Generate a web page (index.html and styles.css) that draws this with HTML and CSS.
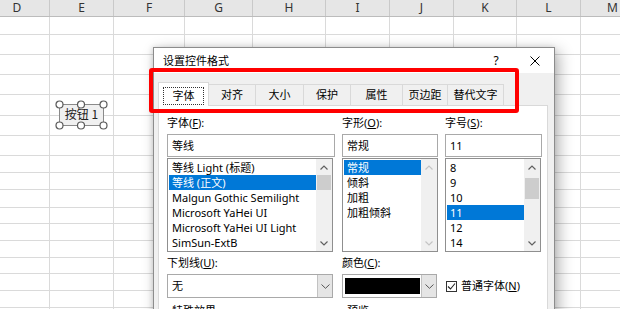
FILE: index.html
```html
<!DOCTYPE html>
<html lang="zh-CN">
<head>
<meta charset="utf-8">
<title>设置控件格式</title>
<link rel="stylesheet" href="styles.css">
</head>
<body>
<div class="sheet">
  <div class="head">
    <div class="hc w-d">D</div>
    <div class="hc w-e">E</div>
    <div class="hc w-f">F</div>
    <div class="hc w-g">G</div>
    <div class="hc w-h">H</div>
    <div class="hc w-i">I</div>
    <div class="hc w-j">J</div>
    <div class="hc w-k">K</div>
    <div class="hc w-l">L</div>
    <div class="hc w-m">M</div>
  </div>
  <div class="body">
    <div class="cols">
      <div class="col w-d"></div>
      <div class="col w-e"></div>
      <div class="col w-f"></div>
      <div class="col w-g"></div>
      <div class="col w-h"></div>
      <div class="col w-i"></div>
      <div class="col w-j"></div>
      <div class="col w-k"></div>
      <div class="col w-l"></div>
      <div class="col w-m"></div>
    </div>
    <div class="rows">
      <div class="row r18"></div>
      <div class="row r20"></div>
      <div class="row r20"></div>
      <div class="row r20"></div>
      <div class="row r21"></div>
      <div class="row r20"></div>
      <div class="row r20"></div>
      <div class="row r17"></div>
      <div class="row r17"></div>
      <div class="row r18"></div>
      <div class="row r16"></div>
      <div class="row r17"></div>
      <div class="row r17"></div>
      <div class="row r16"></div>
      <div class="row r17"></div>
      <div class="row r17"></div>
    </div>
  </div>

  <svg class="shape" width="54" height="30" viewBox="0 0 54 30">
    <rect x="4.5" y="4.5" width="44" height="21" fill="#f0f0f0" stroke="#8a8a8a" stroke-width="1"/>
    <text x="26.5" y="19" text-anchor="middle" class="shape-text">按钮 1</text>
    <circle cx="4.5" cy="4.5" r="3.5" fill="#fff" stroke="#5a5a5a" stroke-width="1.2"/>
    <circle cx="26" cy="4.5" r="3.5" fill="#fff" stroke="#5a5a5a" stroke-width="1.2"/>
    <circle cx="48.5" cy="4.5" r="3.5" fill="#fff" stroke="#5a5a5a" stroke-width="1.2"/>
    <circle cx="4.5" cy="25.5" r="3.5" fill="#fff" stroke="#5a5a5a" stroke-width="1.2"/>
    <circle cx="26" cy="25.5" r="3.5" fill="#fff" stroke="#5a5a5a" stroke-width="1.2"/>
    <circle cx="48.5" cy="25.5" r="3.5" fill="#fff" stroke="#5a5a5a" stroke-width="1.2"/>
  </svg>

  <div class="dialog">
    <div class="titlebar">
      <span class="title">设置控件格式</span>
      <span class="help">?</span>
      <span class="close">
        <svg width="10" height="10" viewBox="0 0 10 10"><path d="M0.5 0.5 L9.5 9.5 M9.5 0.5 L0.5 9.5" stroke="#000" stroke-width="1" fill="none"/></svg>
      </span>
    </div>
    <div class="dlg-body">
      <div class="tabs">
        <div class="tab active t1"><span class="focus">字体</span></div>
        <div class="tab t2">对齐</div>
        <div class="tab t3">大小</div>
        <div class="tab t4">保护</div>
        <div class="tab t5">属性</div>
        <div class="tab t6">页边距</div>
        <div class="tab t7">替代文字</div>
      </div>
      <div class="panel">
        <div class="fgrid">
          <div class="lbl">字体(<u>F</u>):</div>
          <div class="lbl">字形(<u>O</u>):</div>
          <div class="lbl">字号(<u>S</u>):</div>

          <div class="input">等线</div>
          <div class="input">常规</div>
          <div class="input">11</div>

          <div class="list list-font">
            <div class="items">
              <div class="item">等线 Light (标题)</div>
              <div class="item sel">等线 (正文)</div>
              <div class="item">Malgun Gothic Semilight</div>
              <div class="item">Microsoft YaHei UI</div>
              <div class="item">Microsoft YaHei UI Light</div>
              <div class="item">SimSun-ExtB</div>
            </div>
            <div class="sbar">
              <div class="arrow"><svg width="8" height="5" viewBox="0 0 8 5"><path d="M0.5 4.5 L4 1 L7.5 4.5" stroke="#606060" stroke-width="1.2" fill="none"/></svg></div>
              <div class="track"><div class="thumb thumb-font"></div></div>
              <div class="arrow"><svg width="8" height="5" viewBox="0 0 8 5"><path d="M0.5 0.5 L4 4 L7.5 0.5" stroke="#606060" stroke-width="1.2" fill="none"/></svg></div>
            </div>
          </div>
          <div class="list list-style">
            <div class="items">
              <div class="item sel">常规</div>
              <div class="item">倾斜</div>
              <div class="item">加粗</div>
              <div class="item">加粗倾斜</div>
            </div>
            <div class="sbar">
              <div class="arrow"><svg width="8" height="5" viewBox="0 0 8 5"><path d="M0.5 4.5 L4 1 L7.5 4.5" stroke="#c4c4c4" stroke-width="1.2" fill="none"/></svg></div>
              <div class="track"></div>
              <div class="arrow"><svg width="8" height="5" viewBox="0 0 8 5"><path d="M0.5 0.5 L4 4 L7.5 0.5" stroke="#c4c4c4" stroke-width="1.2" fill="none"/></svg></div>
            </div>
          </div>
          <div class="list list-size">
            <div class="items">
              <div class="item">8</div>
              <div class="item">9</div>
              <div class="item">10</div>
              <div class="item sel">11</div>
              <div class="item">12</div>
              <div class="item">14</div>
            </div>
            <div class="sbar">
              <div class="arrow"><svg width="8" height="5" viewBox="0 0 8 5"><path d="M0.5 4.5 L4 1 L7.5 4.5" stroke="#606060" stroke-width="1.2" fill="none"/></svg></div>
              <div class="track"><div class="thumb thumb-size"></div></div>
              <div class="arrow"><svg width="8" height="5" viewBox="0 0 8 5"><path d="M0.5 0.5 L4 4 L7.5 0.5" stroke="#606060" stroke-width="1.2" fill="none"/></svg></div>
            </div>
          </div>

          <div class="lbl">下划线(<u>U</u>):</div>
          <div class="lbl">颜色(<u>C</u>):</div>
          <div class="lbl"></div>

          <div class="combo combo-under">
            <span class="combo-val">无</span>
            <span class="combo-btn"><svg width="9" height="5" viewBox="0 0 9 5"><path d="M0.5 0.5 L4.5 4.3 L8.5 0.5" stroke="#555" stroke-width="1" fill="none"/></svg></span>
          </div>
          <div class="combo combo-color">
            <span class="swatch"></span>
            <span class="combo-btn"><svg width="9" height="5" viewBox="0 0 9 5"><path d="M0.5 0.5 L4.5 4.3 L8.5 0.5" stroke="#555" stroke-width="1" fill="none"/></svg></span>
          </div>
          <div class="check-row">
            <span class="checkbox"><svg width="9" height="9" viewBox="0 0 9 9"><path d="M1 4.5 L3.5 7 L8 1.5" stroke="#222" stroke-width="1.1" fill="none"/></svg></span>
            <span class="check-text">普通字体(<u>N</u>)</span>
          </div>

          <div class="lbl grp">特殊效果</div>
          <div class="lbl grp">预览</div>
          <div class="lbl"></div>
        </div>
      </div>
    </div>
  </div>

  <div class="highlight"></div>
</div>
</body>
</html>
```

FILE: styles.css
```css
* { box-sizing: border-box; }

body {
  margin: 0;
  font-family: "Noto Sans", "Noto Sans CJK SC", sans-serif;
  background: #fff;
}

.sheet {
  position: relative;
  width: 620px;
  height: 309px;
  overflow: hidden;
  background: #fff;
}

/* column header */
.head {
  display: flex;
  height: 17px;
  margin-left: -15px;
  background: #e6e6e6;
  border-bottom: 1px solid #bcbcbc;
}
.hc {
  flex: none;
  border-right: 1px solid #c9c9c9;
  text-align: center;
  font-size: 12px;
  line-height: 16px;
  color: #333;
}

.w-d { width: 65px; }
.w-e { width: 64px; }
.w-f { width: 71px; }
.w-g { width: 68px; }
.w-h { width: 73px; }
.w-i { width: 64px; }
.w-j { width: 64px; }
.w-k { width: 63px; }
.w-l { width: 64px; }
.w-m { width: 64px; }

/* grid body */
.body {
  display: grid;
}
.cols, .rows {
  grid-area: 1 / 1;
}
.cols {
  display: flex;
  margin-left: -15px;
}
.col {
  flex: none;
  height: 292px;
  border-right: 1px solid #dadada;
}
.rows {
  display: flex;
  flex-direction: column;
}
.row {
  flex: none;
  border-bottom: 1px solid #dadada;
}
.r16 { height: 16px; }
.r17 { height: 17px; }
.r18 { height: 18px; }
.r20 { height: 20px; }
.r21 { height: 21px; }

/* form button shape on the sheet */
.shape {
  position: absolute;
  left: 55px;
  top: 100px;
}
.shape-text {
  font-family: "Noto Sans CJK SC", sans-serif;
  font-size: 12px;
  fill: #222;
}

/* dialog */
.dialog {
  position: absolute;
  left: 153px;
  top: 47px;
  width: 402px;
  height: 300px;
  background: #f0f0f0;
  border: 1px solid #8c8c8c;
  box-shadow: 4px 4px 14px rgba(0, 0, 0, 0.3), -1px 0 5px rgba(0, 0, 0, 0.12);
  font-size: 11px;
  color: #000;
}

.titlebar {
  display: flex;
  align-items: center;
  height: 25px;
  background: #fff;
  padding-left: 9px;
  padding-right: 4px;
}
.title {
  font-size: 11px;
  line-height: 16px;
  margin-top: 1px;
}
.help {
  margin-left: auto;
  width: 20px;
  text-align: center;
  font-size: 12px;
  line-height: 16px;
  margin-top: 1px;
}
.close {
  width: 30px;
  margin-left: 14px;
  display: flex;
  justify-content: center;
  align-items: center;
  margin-top: 1px;
}

.dlg-body {
  padding: 9px 6px 0 4px;
}

/* tabs */
.tabs {
  display: flex;
  align-items: flex-end;
  height: 23px;
  position: relative;
  z-index: 1;
}
.tab {
  flex: none;
  height: 21px;
  margin-left: -1px;
  border: 1px solid #d9d9d9;
  border-bottom: none;
  background: #f0f0f0;
  text-align: center;
  line-height: 19px;
  font-size: 11px;
}
.tab.active {
  height: 24px;
  margin-left: 0;
  margin-bottom: -1px;
  background: #fff;
  padding-top: 3px;
  position: relative;
  z-index: 2;
}
.focus {
  display: inline-block;
  width: 41px;
  height: 18px;
  border: 1px dotted #333;
  line-height: 16px;
}
.t1 { width: 51px; }
.t2 { width: 48px; margin-left: -1px; }
.t3 { width: 49px; }
.t4 { width: 48px; }
.t5 { width: 53px; }
.t6 { width: 46px; }
.t7 { width: 57px; }

/* panel */
.panel {
  height: 230px;
  background: #fff;
  border: 1px solid #d9d9d9;
  padding: 9px 0 0 8px;
}

.fgrid {
  display: grid;
  grid-template-columns: 168px 96px 97px;
  grid-template-rows: 19px 24px 97px 19px 29px 16px;
  column-gap: 7px;
}

.lbl {
  line-height: 16px;
  font-size: 11px;
  white-space: nowrap;
}
.lbl u { text-underline-offset: 1px; }
.grp { padding-left: 5px; }

.input {
  height: 23px;
  border: 1px solid #a9a9a9;
  padding-left: 4px;
  line-height: 21px;
  font-size: 11px;
}

.list {
  display: flex;
  height: 94px;
  border: 1px solid #8f8f8f;
  padding: 1px 0 1px 1px;
}
.list-font { width: 166px; }
.list-style { width: 96px; }
.list-size { width: 96px; }

.items {
  flex: 1;
  min-width: 0;
}
.item {
  height: 15px;
  line-height: 15px;
  padding-left: 3px;
  white-space: nowrap;
  overflow: hidden;
  font-size: 11px;
}
.item.sel {
  background: #0078d7;
  color: #fff;
}
.list-style .item.sel { margin-right: 0; }

.sbar {
  flex: none;
  width: 16px;
  margin-top: -1px;
  margin-bottom: -1px;
  display: flex;
  flex-direction: column;
  background: #f0f0f0;
}
.arrow {
  height: 16px;
  display: flex;
  align-items: center;
  justify-content: center;
}
.track {
  flex: 1;
}
.thumb {
  background: #cdcdcd;
  margin: 0 1px;
}
.thumb-font { height: 15px; margin-top: 0; }
.thumb-size { height: 21px; margin-top: 3px; }

/* combos */
.combo {
  display: flex;
  height: 24px;
  border: 1px solid #a9a9a9;
}
.combo-under { width: 166px; }
.combo-color { width: 95px; padding: 3px 0 3px 2px; }
.combo-val {
  flex: 1;
  padding-left: 4px;
  line-height: 22px;
  font-size: 11px;
}
.combo-btn {
  flex: none;
  width: 15px;
  background: #e5e5e5;
  border-left: 1px solid #c2c2c2;
  display: flex;
  align-items: center;
  justify-content: center;
}
.combo-color .combo-btn {
  margin: -3px 0;
}
.swatch {
  flex: 1;
  background: #000;
  margin-right: 1px;
}

.check-row {
  height: 24px;
  display: flex;
  align-items: center;
  gap: 4px;
  padding-left: 1px;
}
.checkbox {
  width: 11px;
  height: 11px;
  border: 1px solid #333;
  background: #fff;
  display: flex;
  align-items: center;
  justify-content: center;
}
.check-text {
  font-size: 11px;
  line-height: 16px;
  white-space: nowrap;
}

/* red annotation rectangle */
.highlight {
  position: absolute;
  left: 149px;
  top: 68px;
  width: 370px;
  height: 45px;
  border: 4.5px solid #ff0000;
  border-radius: 3px;
}
```
